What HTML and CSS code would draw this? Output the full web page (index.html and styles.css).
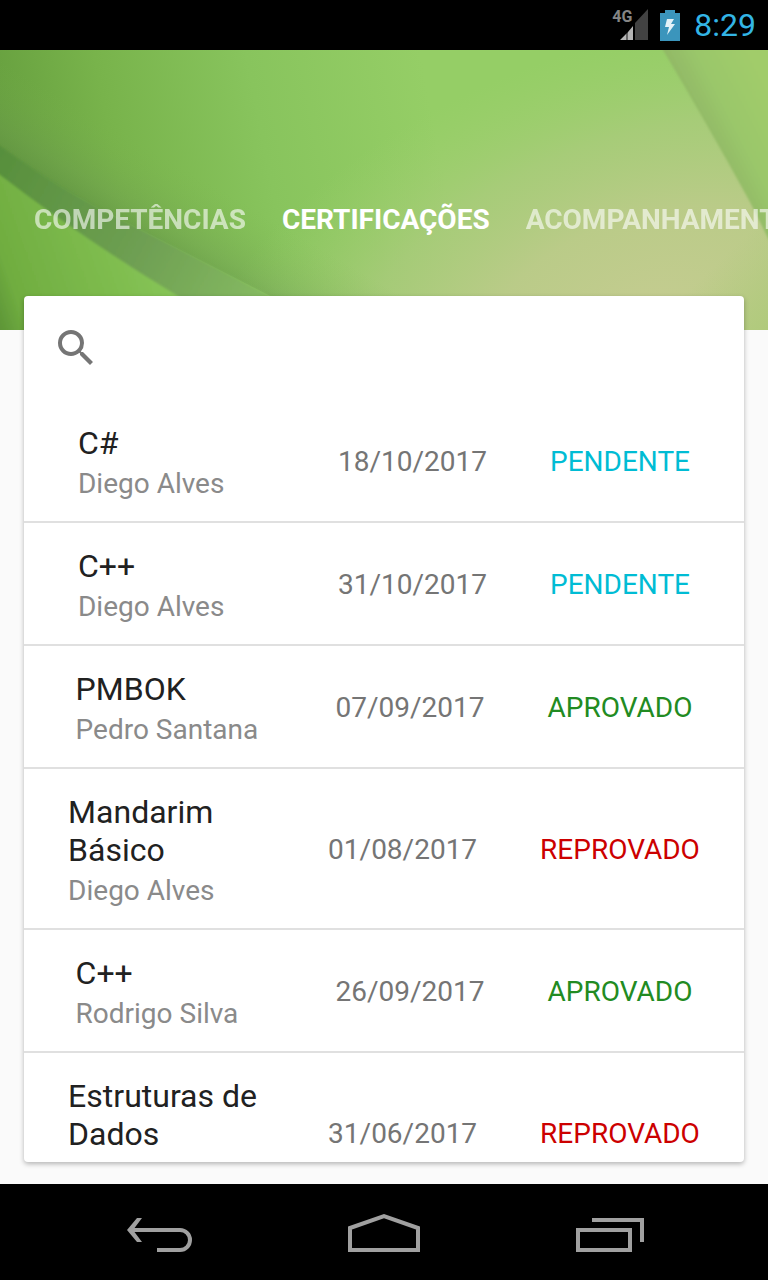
FILE: index.html
```
<!DOCTYPE html>
<html lang="pt-BR">
<head>
<meta charset="utf-8">
<meta name="viewport" content="width=device-width, initial-scale=1">
<title>Certificações</title>
<link rel="stylesheet" href="styles.css">
</head>
<body>
<div class="status-bar">
  <div class="signal">
    <svg class="signal-bars" viewBox="0 0 36 32" aria-hidden="true">
      <path d="M36 0V31H23V14Z" fill="#424242"/>
      <path d="M8 31L14 25V31ZM16 23L21 17V31H16Z" fill="#b5b5b5"/>
      <path d="M14 25L16 23V31H14Z" fill="#666"/>
    </svg>
    <span class="signal-text">4G</span>
  </div>
  <svg class="battery" viewBox="0 0 20 31" role="img" aria-label="Carregando">
    <path d="M5 0H15V3H20V31H0V3H5Z" fill="#3b95bc"/>
    <path d="M7 9H14L11 14H15L7 25L9 17H5Z" fill="#e3f2f8"/>
  </svg>
  <time class="clock">8:29</time>
</div>

<header class="header">
  <svg class="header-art" viewBox="0 0 768 280" preserveAspectRatio="none" aria-hidden="true">
    <defs>
      <linearGradient id="base" gradientUnits="userSpaceOnUse" x1="0" y1="80" x2="420" y2="0">
        <stop offset="0" stop-color="#67a03f"/>
        <stop offset="0.25" stop-color="#78b34b"/>
        <stop offset="0.6" stop-color="#88c45d"/>
        <stop offset="1" stop-color="#95ce66"/>
      </linearGradient>
      <radialGradient id="sand" gradientUnits="userSpaceOnUse" cx="0" cy="0" r="1" gradientTransform="translate(650 260) rotate(-18) scale(480 270)">
        <stop offset="0" stop-color="#c4cc90"/>
        <stop offset="0.35" stop-color="#bccb8a" stop-opacity="0.95"/>
        <stop offset="0.65" stop-color="#aecb80" stop-opacity="0.7"/>
        <stop offset="1" stop-color="#a0cf70" stop-opacity="0"/>
      </radialGradient>
      <linearGradient id="fold" gradientUnits="userSpaceOnUse" x1="100" y1="172" x2="145" y2="95">
        <stop offset="0" stop-color="#55843f" stop-opacity="0.5"/>
        <stop offset="0.35" stop-color="#6a9550" stop-opacity="0.3"/>
        <stop offset="1" stop-color="#7cb350" stop-opacity="0"/>
      </linearGradient>
      <linearGradient id="band" gradientUnits="userSpaceOnUse" x1="0" y1="100" x2="280" y2="250">
        <stop offset="0" stop-color="#578f3c"/>
        <stop offset="0.55" stop-color="#6fa053"/>
        <stop offset="1" stop-color="#88bd63"/>
      </linearGradient>
      <linearGradient id="leaf" gradientUnits="userSpaceOnUse" x1="0" y1="280" x2="170" y2="220">
        <stop offset="0" stop-color="#5d9537"/>
        <stop offset="0.15" stop-color="#70ad40"/>
        <stop offset="1" stop-color="#87c557"/>
      </linearGradient>
      <linearGradient id="corner" gradientUnits="userSpaceOnUse" x1="700" y1="75" x2="768" y2="40">
        <stop offset="0" stop-color="#91b865"/>
        <stop offset="0.4" stop-color="#9ac76b"/>
        <stop offset="1" stop-color="#a1cc6b"/>
      </linearGradient>
      <linearGradient id="edge" gradientUnits="userSpaceOnUse" x1="710" y1="220" x2="768" y2="280">
        <stop offset="0" stop-color="#b0ca7c" stop-opacity="0"/>
        <stop offset="1" stop-color="#b0ca7c"/>
      </linearGradient>
      <filter id="soft" x="-10%" y="-10%" width="120%" height="120%"><feGaussianBlur stdDeviation="1"/></filter>
    </defs>
    <rect width="768" height="280" fill="url(#base)"/>
    <rect width="768" height="280" fill="url(#sand)"/>
    <rect x="640" y="140" width="128" height="140" fill="url(#edge)"/>
    <path d="M0 0V97Q60 140 130 174Q200 210 270 246L400 300L500 280Z" fill="url(#fold)"/>
    <path d="M-5 92Q60 140 130 174Q200 210 275 249L340 285H150L-5 130Z" fill="url(#band)" filter="url(#soft)"/>
    <path d="M-5 121Q80 187 178 246L230 285H-5Z" fill="url(#leaf)" filter="url(#soft)"/>
    <path d="M660 -5Q705 70 750 152L773 198V-5Z" fill="url(#corner)" filter="url(#soft)"/>
  </svg>
  <nav class="tabs" aria-label="Seções">
    <a class="tab" href="#competencias">COMPETÊNCIAS</a>
    <a class="tab tab-active" href="#certificacoes" aria-current="page">CERTIFICAÇÕES</a>
    <a class="tab" href="#acompanhamento">ACOMPANHAMENTO</a>
  </nav>
</header>

<main class="card">
  <form class="search" role="search">
    <button class="search-button" type="button" aria-label="Buscar">
      <svg viewBox="0 0 24 24" aria-hidden="true"><path fill="#757575" d="M15.5 14h-.79l-.28-.27A6.47 6.47 0 0 0 16 9.5 6.5 6.5 0 1 0 9.5 16c1.61 0 3.09-.59 4.23-1.57l.27.28v.79l5 4.99L20.49 19l-4.99-5zm-6 0C7.01 14 5 11.99 5 9.5S7.01 5 9.5 5 14 7.01 14 9.5 11.99 14 9.5 14z"/></svg>
    </button>
    <input class="search-input" type="text" aria-label="Buscar certificações">
  </form>
  <ul class="list">
    <li class="row">
      <div class="info"><h2 class="title">C#</h2><p class="person">Diego Alves</p></div>
      <time class="date">18/10/2017</time><span class="state pending">PENDENTE</span>
    </li>
    <li class="row">
      <div class="info"><h2 class="title">C++</h2><p class="person">Diego Alves</p></div>
      <time class="date">31/10/2017</time><span class="state pending">PENDENTE</span>
    </li>
    <li class="row">
      <div class="info"><h2 class="title">PMBOK</h2><p class="person">Pedro Santana</p></div>
      <time class="date">07/09/2017</time><span class="state approved">APROVADO</span>
    </li>
    <li class="row">
      <div class="info"><h2 class="title">Mandarim Básico</h2><p class="person">Diego Alves</p></div>
      <time class="date">01/08/2017</time><span class="state rejected">REPROVADO</span>
    </li>
    <li class="row">
      <div class="info"><h2 class="title">C++</h2><p class="person">Rodrigo Silva</p></div>
      <time class="date">26/09/2017</time><span class="state approved">APROVADO</span>
    </li>
    <li class="row">
      <div class="info"><h2 class="title">Estruturas de Dados</h2><p class="person"></p></div>
      <time class="date">31/06/2017</time><span class="state rejected">REPROVADO</span>
    </li>
  </ul>
</main>

<footer class="nav-bar">
  <button class="nav-button" type="button" aria-label="Voltar">
    <svg viewBox="0 0 72 48" aria-hidden="true"><path d="M11 22H60A10 10 0 0 1 60 42H37" fill="none" stroke="#a0a0a0" stroke-width="4"/><path d="M17 10H22L13 22L22 34H17L7 22Z" fill="#a0a0a0"/></svg>
  </button>
  <button class="nav-button" type="button" aria-label="Início">
    <svg viewBox="0 0 72 48" aria-hidden="true"><path d="M2 42V20L36 8L70 20V42Z" fill="none" stroke="#a0a0a0" stroke-width="4"/></svg>
  </button>
  <button class="nav-button" type="button" aria-label="Recentes">
    <svg viewBox="0 0 72 48" aria-hidden="true"><path d="M2 22H54V42H2ZM16 12H66V34" fill="none" stroke="#a0a0a0" stroke-width="4"/></svg>
  </button>
</footer>
</body>
</html>
```
FILE: styles.css
```
* {
  box-sizing: border-box;
}

body {
  margin: 0;
  height: 100vh;
  display: flex;
  flex-direction: column;
  overflow: hidden;
  background: #fafafa;
  font-family: Roboto, "Noto Sans", sans-serif;
}

button {
  border: 0;
  padding: 0;
  background: none;
}

.status-bar {
  flex: none;
  height: 50px;
  padding: 0 12px;
  display: flex;
  align-items: center;
  justify-content: flex-end;
  gap: 12px;
  background: #000;
}

.signal {
  position: relative;
  width: 36px;
  height: 32px;
}

.signal-bars {
  display: block;
  width: 36px;
  height: 32px;
}

.signal-text {
  position: absolute;
  top: 0;
  left: 0;
  color: #858585;
  font-size: 16px;
  font-weight: 700;
  line-height: 16px;
}

.battery {
  width: 20px;
  height: 31px;
}

.clock {
  margin-left: 2px;
  color: #33b5e5;
  font-size: 32px;
  line-height: 50px;
}

.header {
  flex: none;
  height: 280px;
  display: grid;
  overflow: hidden;
}

.header-art {
  grid-area: 1 / 1;
  width: 100%;
  height: 280px;
}

.tabs {
  grid-area: 1 / 1;
  z-index: 1;
  min-width: 0;
  align-self: start;
  display: flex;
  gap: 36px;
  padding: 151px 0 0 34px;
}

.tab {
  flex: none;
  color: #fff;
  opacity: 0.6;
  font-size: 28px;
  font-weight: 700;
  line-height: 38px;
  text-decoration: none;
}

.tab-active {
  opacity: 1;
}

.card {
  flex: 1;
  min-height: 0;
  margin: -34px 24px 22px;
  z-index: 1;
  overflow: hidden;
  background: #fff;
  border-radius: 4px;
  box-shadow: 0 2px 5px rgba(0, 0, 0, 0.28);
}

.search {
  display: flex;
  padding: 28px;
}

.search-button,
.search-button svg {
  display: block;
  width: 48px;
  height: 48px;
}

.search-input {
  flex: 1;
  min-width: 0;
  border: 0;
  outline: 0;
  background: none;
  padding: 0 12px;
  font: 28px Roboto, sans-serif;
}

.list {
  margin: 0;
  padding: 0;
  list-style: none;
}

.row {
  display: flex;
  justify-content: center;
  align-items: center;
  gap: 60px;
  padding: 24px 0 21px;
  border-bottom: 2px solid #e0e0e0;
}

.info {
  width: 200px;
}

.title {
  margin: 0;
  color: #212121;
  font-size: 32px;
  font-weight: 400;
  line-height: 38px;
}

.person {
  min-height: 32px;
  margin: 6px 0 0;
  color: #8a8a8a;
  font-size: 28px;
  line-height: 32px;
}

.date {
  width: 152px;
  color: #757575;
  font-size: 28px;
  line-height: 34px;
}

.state {
  font-size: 28px;
  line-height: 34px;
}

.pending {
  color: #00bcd4;
}

.approved {
  color: #228b22;
}

.rejected {
  color: #cc0000;
}

.nav-bar {
  flex: none;
  height: 96px;
  display: flex;
  justify-content: center;
  align-items: center;
  gap: 156px;
  background: #000;
}

.nav-button svg {
  display: block;
  width: 72px;
  height: 48px;
}
```
